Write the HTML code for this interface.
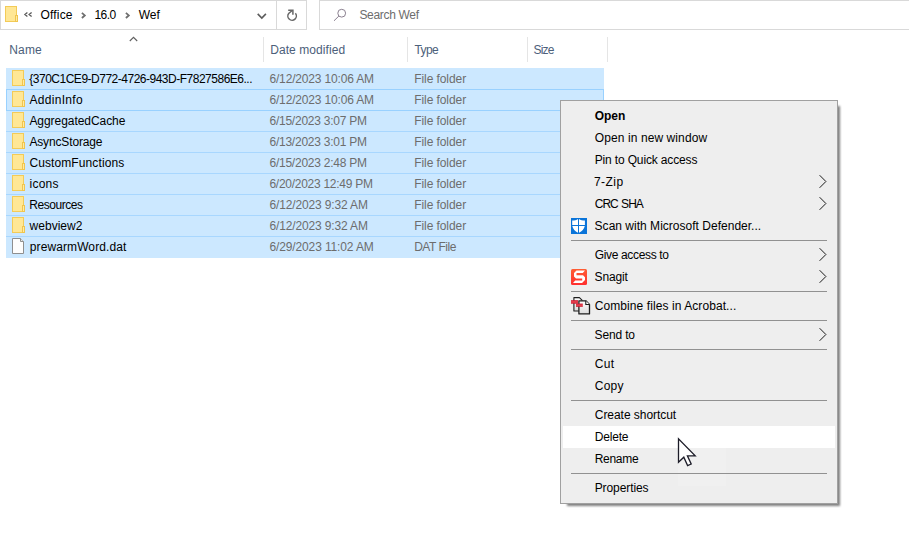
<!DOCTYPE html>
<html><head><meta charset="utf-8"><title>Wef</title>
<style>
html,body{margin:0;padding:0}
body{width:909px;height:537px;overflow:hidden;background:#fff;position:relative;font:12px/16px "Liberation Sans",sans-serif;color:#000}
.a{position:absolute}
.t{position:absolute;white-space:pre;line-height:16px;height:16px}
.b{font-weight:bold}
.row{position:absolute;left:6px;width:598px;height:21px;background:#cce8ff;box-sizing:border-box;border-top:1px solid #a8d7ff}
.row.f{border:1px solid #99d1ff;height:22px}
.row.n{border-top:0}
.vd{position:absolute;top:37px;width:1px;height:25px;background:#e5e5e5}
.sep{position:absolute;left:571px;width:256px;height:1px;background:#919191}
svg{position:absolute;overflow:visible}
</style></head><body>

<div class="a" style="left:0;top:0;width:307px;height:30px;box-sizing:border-box;border:1px solid #d9d9d9"></div>
<div class="a" style="left:276px;top:0;width:1px;height:30px;background:#d9d9d9"></div>
<div class="a" style="left:319px;top:0;width:600px;height:30px;box-sizing:border-box;border:1px solid #d9d9d9"></div>
<svg style="left:5px;top:6px" width="13" height="16" viewBox="0 0 13 16"><rect x="0.5" y="0.5" width="11" height="15" fill="#ffe795" stroke="#f3cb57"/><rect x="10.5" y="9.5" width="2" height="6" fill="#ffeaa3" stroke="#f0c54e"/></svg>
<svg style="left:24px;top:11px" width="9" height="7" viewBox="0 0 9 7"><path d="M3.4 1.5 L0.9 3.5 L3.4 5.5 M7.6 1.5 L5.1 3.5 L7.6 5.5" fill="none" stroke="#5a5a5a" stroke-width="1.3"/></svg>
<svg style="left:81px;top:12px" width="6" height="7" viewBox="0 0 6 7"><path d="M0.9 0.8 L3.8 3.4 L0.9 6" fill="none" stroke="#6e6e6e" stroke-width="1.8"/></svg>
<svg style="left:125px;top:12px" width="6" height="7" viewBox="0 0 6 7"><path d="M0.9 0.8 L3.8 3.4 L0.9 6" fill="none" stroke="#6e6e6e" stroke-width="1.8"/></svg>
<svg style="left:257px;top:13px" width="10" height="7" viewBox="0 0 10 7"><path d="M0.7 0.9 L4.8 5 L8.9 0.9" fill="none" stroke="#5c5c5c" stroke-width="1.6"/></svg>
<svg style="left:286px;top:9px" width="12" height="13" viewBox="0 0 12 13"><path d="M9.4 4.3 A4.25 4.25 0 1 1 2.9 4.2 L6.3 1.5" fill="none" stroke="#666" stroke-width="1.5"/><path d="M2.2 1.3 H6.9 V5.8" fill="none" stroke="#666" stroke-width="1.5"/></svg>
<svg style="left:333px;top:8px" width="14" height="14" viewBox="0 0 14 14"><circle cx="8.7" cy="5.2" r="3.9" fill="none" stroke="#8a7f8f" stroke-width="1"/><path d="M5.9 8 L1 12.8" stroke="#8a7f8f" stroke-width="1"/></svg>
<svg style="left:129px;top:36px" width="9" height="6" viewBox="0 0 9 6"><path d="M0.8 5 L4.5 1.3 L8.2 5" fill="none" stroke="#606060" stroke-width="1.1"/></svg>
<div class="vd" style="left:263px"></div>
<div class="vd" style="left:407px"></div>
<div class="vd" style="left:527px"></div>
<div class="vd" style="left:607px"></div>
<div class="row n" style="top:68px"></div>
<div class="row" style="top:110px"></div>
<div class="row" style="top:131px"></div>
<div class="row" style="top:152px"></div>
<div class="row" style="top:173px"></div>
<div class="row" style="top:194px"></div>
<div class="row" style="top:215px"></div>
<div class="row" style="top:236px;height:22px"></div>
<div class="row f" style="top:89px"></div>
<svg style="left:12px;top:70px" width="13" height="16" viewBox="0 0 13 16"><rect x="0.5" y="0.5" width="11" height="15" fill="#ffe795" stroke="#f3cb57"/><rect x="10.5" y="9.5" width="2" height="6" fill="#ffeaa3" stroke="#f0c54e"/></svg>
<svg style="left:12px;top:91px" width="13" height="16" viewBox="0 0 13 16"><rect x="0.5" y="0.5" width="11" height="15" fill="#ffe795" stroke="#f3cb57"/><rect x="10.5" y="9.5" width="2" height="6" fill="#ffeaa3" stroke="#f0c54e"/></svg>
<svg style="left:12px;top:112px" width="13" height="16" viewBox="0 0 13 16"><rect x="0.5" y="0.5" width="11" height="15" fill="#ffe795" stroke="#f3cb57"/><rect x="10.5" y="9.5" width="2" height="6" fill="#ffeaa3" stroke="#f0c54e"/></svg>
<svg style="left:12px;top:133px" width="13" height="16" viewBox="0 0 13 16"><rect x="0.5" y="0.5" width="11" height="15" fill="#ffe795" stroke="#f3cb57"/><rect x="10.5" y="9.5" width="2" height="6" fill="#ffeaa3" stroke="#f0c54e"/></svg>
<svg style="left:12px;top:154px" width="13" height="16" viewBox="0 0 13 16"><rect x="0.5" y="0.5" width="11" height="15" fill="#ffe795" stroke="#f3cb57"/><rect x="10.5" y="9.5" width="2" height="6" fill="#ffeaa3" stroke="#f0c54e"/></svg>
<svg style="left:12px;top:175px" width="13" height="16" viewBox="0 0 13 16"><rect x="0.5" y="0.5" width="11" height="15" fill="#ffe795" stroke="#f3cb57"/><rect x="10.5" y="9.5" width="2" height="6" fill="#ffeaa3" stroke="#f0c54e"/></svg>
<svg style="left:12px;top:196px" width="13" height="16" viewBox="0 0 13 16"><rect x="0.5" y="0.5" width="11" height="15" fill="#ffe795" stroke="#f3cb57"/><rect x="10.5" y="9.5" width="2" height="6" fill="#ffeaa3" stroke="#f0c54e"/></svg>
<svg style="left:12px;top:217px" width="13" height="16" viewBox="0 0 13 16"><rect x="0.5" y="0.5" width="11" height="15" fill="#ffe795" stroke="#f3cb57"/><rect x="10.5" y="9.5" width="2" height="6" fill="#ffeaa3" stroke="#f0c54e"/></svg>
<svg style="left:12px;top:238px" width="12" height="16" viewBox="0 0 12 16"><path d="M0.5 0.5 H8.5 L11.5 3.5 V15.5 H0.5 Z" fill="#fdfdfd" stroke="#8f8f8f"/><path d="M8.5 0.5 V3.5 H11.5" fill="#e8e8e8" stroke="#8f8f8f"/></svg>
<div class="a" style="left:567px;top:106px;width:273px;height:400px;background:rgba(0,0,0,0.5);filter:blur(1.2px)"></div>
<div class="a" id="menu" style="left:560px;top:100px;width:278px;height:404px;box-sizing:border-box;border:1px solid #a0a0a0;background:#eeeeee"></div>
<div class="a" style="left:563px;top:426px;width:272px;height:22px;background:#fff"></div>
<div class="a" style="left:678px;top:448px;width:48px;height:38px;background:#f0f0f0"></div>
<div class="sep" style="top:240px"></div>
<div class="sep" style="top:291px"></div>
<div class="sep" style="top:320px"></div>
<div class="sep" style="top:349px"></div>
<div class="sep" style="top:400px"></div>
<div class="sep" style="top:473px"></div>
<svg style="left:819px;top:175px" width="8" height="14" viewBox="0 0 8 14"><path d="M0.6 0.2 L6.9 6.5 L0.6 12.8" fill="none" stroke="#1a1a1a" stroke-width="1"/></svg>
<svg style="left:819px;top:197px" width="8" height="14" viewBox="0 0 8 14"><path d="M0.6 0.2 L6.9 6.5 L0.6 12.8" fill="none" stroke="#1a1a1a" stroke-width="1"/></svg>
<svg style="left:819px;top:248px" width="8" height="14" viewBox="0 0 8 14"><path d="M0.6 0.2 L6.9 6.5 L0.6 12.8" fill="none" stroke="#1a1a1a" stroke-width="1"/></svg>
<svg style="left:819px;top:270px" width="8" height="14" viewBox="0 0 8 14"><path d="M0.6 0.2 L6.9 6.5 L0.6 12.8" fill="none" stroke="#1a1a1a" stroke-width="1"/></svg>
<svg style="left:819px;top:328px" width="8" height="14" viewBox="0 0 8 14"><path d="M0.6 0.2 L6.9 6.5 L0.6 12.8" fill="none" stroke="#1a1a1a" stroke-width="1"/></svg>
<svg style="left:571px;top:218px" width="16" height="16" viewBox="0 0 16 16"><rect width="16" height="16" fill="#0a74d9"/><path d="M1.2 2.6 C3.5 2.6 5.6 2 7 1 L7 7 L1.2 7 Z M8 1 C9.4 2 11.5 2.6 13.9 2.6 L13.9 7 L8 7 Z M1.3 8 L7 8 L7 14.8 C4 13.3 1.9 11 1.3 8 Z M8 8 L13.8 8 C13.2 11 11 13.3 8 14.8 Z" fill="#fff"/></svg>
<svg style="left:571px;top:269px" width="16" height="16" viewBox="0 0 16 16"><defs><linearGradient id="sg" x1="0" y1="0" x2="0" y2="1"><stop offset="0" stop-color="#ff5d33"/><stop offset="1" stop-color="#ff2f2f"/></linearGradient></defs><rect width="16" height="16" rx="1.5" fill="url(#sg)"/><path d="M5.5 1.5 H14 L11.8 4 H5.5 L5.5 6.2 H12 L14 8.2 V11 L11 14 H2 L4.2 11.6 H11.2 V9.4 H5 L3 7.4 V4 Z" fill="#fff"/></svg>
<svg style="left:571px;top:296px" width="20" height="19" viewBox="0 0 20 19"><defs><linearGradient id="dg" x1="0" y1="0" x2="0" y2="1"><stop offset="0" stop-color="#ffffff"/><stop offset="1" stop-color="#dcdcdc"/></linearGradient><linearGradient id="rg" x1="0" y1="0" x2="0" y2="1"><stop offset="0" stop-color="#c4122a"/><stop offset="0.5" stop-color="#ee4a55"/><stop offset="1" stop-color="#c4122a"/></linearGradient></defs><path d="M2.9 1.6 H8.4 L11 4.2 V15 H2.9 Z" fill="url(#dg)" stroke="#1e1e1e" stroke-width="1.1" stroke-linejoin="round"/><path d="M7.9 4.8 H14.8 L18.5 8.5 V17.9 H7.9 Z" fill="url(#dg)" stroke="#1e1e1e" stroke-width="1.3" stroke-linejoin="round"/><path d="M14.8 4.8 V8.5 H18.5" fill="#fff" stroke="#1e1e1e" stroke-width="1.1" stroke-linejoin="round"/><rect x="0" y="4.2" width="7" height="3.5" fill="url(#rg)"/><rect x="5" y="7.6" width="6.8" height="3.2" fill="url(#rg)"/></svg>
<span class="t" id="t0" style="left:40.41px;top:7px;letter-spacing:0.193px">Office</span>
<span class="t" id="t1" style="left:94.48px;top:7px;letter-spacing:-0.546px">16.0</span>
<span class="t" id="t2" style="left:138.73px;top:7px;letter-spacing:-0.034px">Wef</span>
<span class="t" id="t3" style="left:359.40px;top:7px;letter-spacing:-0.318px;color:#6d6d6d">Search Wef</span>
<span class="t" id="t4" style="left:9.34px;top:42px;letter-spacing:0.114px;color:#4c607a">Name</span>
<span class="t" id="t5" style="left:270.20px;top:42px;letter-spacing:0.072px;color:#4c607a">Date modified</span>
<span class="t" id="t6" style="left:414.42px;top:42px;letter-spacing:-0.550px;color:#4c607a">Type</span>
<span class="t" id="t7" style="left:533.40px;top:42px;letter-spacing:-0.742px;color:#4c607a">Size</span>
<span class="t" id="t8" style="left:29.31px;top:71px;letter-spacing:-0.494px">{370C1CE9-D772-4726-943D-F7827586E6...</span>
<span class="t" id="t9" style="left:269.46px;top:71px;letter-spacing:-0.168px;color:#6d6d6d">6/12/2023 10:06 AM</span>
<span class="t" id="t10" style="left:414.20px;top:71px;letter-spacing:-0.073px;color:#6d6d6d">File folder</span>
<span class="t" id="t11" style="left:29.40px;top:92px;letter-spacing:0.326px">AddinInfo</span>
<span class="t" id="t12" style="left:269.46px;top:92px;letter-spacing:-0.168px;color:#6d6d6d">6/12/2023 10:06 AM</span>
<span class="t" id="t13" style="left:414.20px;top:92px;letter-spacing:-0.073px;color:#6d6d6d">File folder</span>
<span class="t" id="t14" style="left:29.40px;top:113px;letter-spacing:-0.051px">AggregatedCache</span>
<span class="t" id="t15" style="left:269.46px;top:113px;letter-spacing:-0.237px;color:#6d6d6d">6/15/2023 3:07 PM</span>
<span class="t" id="t16" style="left:414.20px;top:113px;letter-spacing:-0.073px;color:#6d6d6d">File folder</span>
<span class="t" id="t17" style="left:29.40px;top:134px;letter-spacing:-0.142px">AsyncStorage</span>
<span class="t" id="t18" style="left:269.46px;top:134px;letter-spacing:-0.237px;color:#6d6d6d">6/13/2023 3:01 PM</span>
<span class="t" id="t19" style="left:414.20px;top:134px;letter-spacing:-0.073px;color:#6d6d6d">File folder</span>
<span class="t" id="t20" style="left:29.40px;top:155px;letter-spacing:0.104px">CustomFunctions</span>
<span class="t" id="t21" style="left:269.46px;top:155px;letter-spacing:-0.237px;color:#6d6d6d">6/15/2023 2:48 PM</span>
<span class="t" id="t22" style="left:414.20px;top:155px;letter-spacing:-0.073px;color:#6d6d6d">File folder</span>
<span class="t" id="t23" style="left:29.62px;top:176px;letter-spacing:0.209px">icons</span>
<span class="t" id="t24" style="left:269.46px;top:176px;letter-spacing:-0.274px;color:#6d6d6d">6/20/2023 12:49 PM</span>
<span class="t" id="t25" style="left:414.20px;top:176px;letter-spacing:-0.073px;color:#6d6d6d">File folder</span>
<span class="t" id="t26" style="left:29.34px;top:197px;letter-spacing:-0.461px">Resources</span>
<span class="t" id="t27" style="left:269.46px;top:197px;letter-spacing:-0.141px;color:#6d6d6d">6/12/2023 9:32 AM</span>
<span class="t" id="t28" style="left:414.20px;top:197px;letter-spacing:-0.073px;color:#6d6d6d">File folder</span>
<span class="t" id="t29" style="left:29.62px;top:218px;letter-spacing:0.010px">webview2</span>
<span class="t" id="t30" style="left:269.46px;top:218px;letter-spacing:-0.141px;color:#6d6d6d">6/12/2023 9:32 AM</span>
<span class="t" id="t31" style="left:414.20px;top:218px;letter-spacing:-0.073px;color:#6d6d6d">File folder</span>
<span class="t" id="t32" style="left:29.77px;top:239px;letter-spacing:0.101px">prewarmWord.dat</span>
<span class="t" id="t33" style="left:269.46px;top:239px;letter-spacing:-0.129px;color:#6d6d6d">6/29/2023 11:02 AM</span>
<span class="t" id="t34" style="left:414.20px;top:239px;letter-spacing:-0.481px;color:#6d6d6d">DAT File</span>
<span class="t b" id="t35" style="left:594.87px;top:108px;letter-spacing:-0.080px">Open</span>
<span class="t" id="t36" style="left:594.81px;top:130px;letter-spacing:0.091px">Open in new window</span>
<span class="t" id="t37" style="left:594.71px;top:152px;letter-spacing:-0.150px">Pin to Quick access</span>
<span class="t" id="t38" style="left:593.92px;top:174px;letter-spacing:0.461px">7-Zip</span>
<span class="t" id="t39" style="left:594.78px;top:196px;letter-spacing:-0.994px;word-spacing:1px">CRC SHA</span>
<span class="t" id="t40" style="left:594.60px;top:218px;letter-spacing:0.016px">Scan with Microsoft Defender...</span>
<span class="t" id="t41" style="left:594.77px;top:247px;letter-spacing:-0.348px">Give access to</span>
<span class="t" id="t42" style="left:594.60px;top:269px;letter-spacing:-0.136px">Snagit</span>
<span class="t" id="t43" style="left:594.78px;top:298px;letter-spacing:0.079px">Combine files in Acrobat...</span>
<span class="t" id="t44" style="left:594.60px;top:327px;letter-spacing:-0.164px">Send to</span>
<span class="t" id="t45" style="left:594.78px;top:356px;letter-spacing:0.269px">Cut</span>
<span class="t" id="t46" style="left:594.78px;top:378px;letter-spacing:0.226px">Copy</span>
<span class="t" id="t47" style="left:594.78px;top:407px;letter-spacing:-0.043px">Create shortcut</span>
<span class="t" id="t48" style="left:594.71px;top:429px;letter-spacing:-0.175px">Delete</span>
<span class="t" id="t49" style="left:594.71px;top:451px;letter-spacing:-0.285px">Rename</span>
<span class="t" id="t50" style="left:594.71px;top:480px;letter-spacing:-0.091px">Properties</span>
<svg style="left:677px;top:437px" width="20" height="30" viewBox="0 0 20 30"><path d="M1.5 1.8 V25.2 L6.8 20.2 L10.6 28.6 L14.2 27 L10.4 18.8 H18.2 Z" fill="#fff" stroke="#1c1c28" stroke-width="1.3" stroke-linejoin="miter"/></svg>
</body></html>
